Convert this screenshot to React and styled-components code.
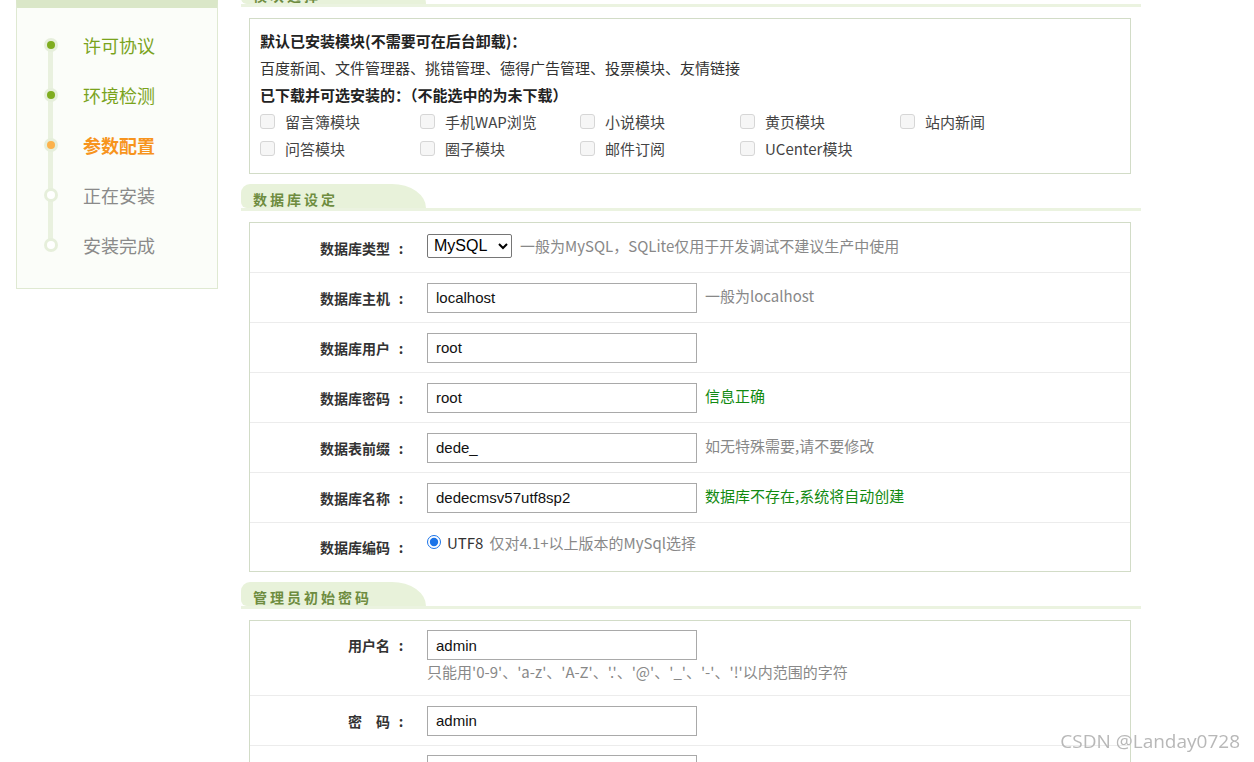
import styled, { createGlobalStyle } from "styled-components"

const Global = createGlobalStyle`
  html, body { margin: 0; padding: 0; background: #fff; }
  body {
    font-family: "Noto Sans CJK SC", "Liberation Sans", sans-serif;
    font-size: 15px;
    color: #333;
    overflow: hidden;
  }
`

const Page = styled.div`
  display: flex;
  align-items: flex-start;
  height: 762px;
  overflow: hidden;
`

const Sidebar = styled.div`
  margin-left: 16px;
  width: 200px;
  height: 280px;
  box-sizing: content-box;
  background: #fbfdf9;
  border: 1px solid #dfe9d2;
  border-top: 8px solid #dae7c8;
`

const StepList = styled.ul`
  list-style: none;
  margin: 0;
  padding: 12px 0 0 0;
  position: relative;
  &::before {
    content: "";
    position: absolute;
    left: 31px;
    top: 38px;
    height: 200px;
    width: 5px;
    background: #e9f1df;
  }
`

const Step = styled.li`
  display: flex;
  align-items: center;
  height: 50px;
  font-size: 18px;
  line-height: 50px;
  color: ${p => (p.$state === "done" ? "#7aa31c" : p.$state === "cur" ? "#f7941d" : "#8a8a8a")};
  font-weight: ${p => (p.$state === "cur" ? "bold" : "normal")};
`

const Dot = styled.span`
  width: 14px;
  height: 14px;
  margin-left: 27px;
  margin-right: 25px;
  border-radius: 50%;
  background: #e6efdb;
  display: flex;
  align-items: center;
  justify-content: center;
  position: relative;
  z-index: 1;
  &::after {
    content: "";
    width: 8px;
    height: 8px;
    border-radius: 50%;
    background: ${p => (p.$state === "done" ? "#7fad20" : p.$state === "cur" ? "#fcb24c" : "#ffffff")};
  }
`

const Main = styled.div`
  margin-left: 23px;
  margin-top: -20px;
  width: 900px;
`

const SectionHead = styled.div`
  height: 24px;
  border-bottom: 3px solid #ebf3e0;
  display: flex;
`

const Tab = styled.div`
  width: 185px;
  height: 24px;
  background: #e8f2da;
  border-radius: 9px 34px 0 6px / 9px 24px 0 6px;
  padding-left: 12px;
  box-sizing: border-box;
  font-size: 14px;
  font-weight: bold;
  letter-spacing: 3px;
  color: #6e8c3f;
  line-height: 30px;
`

const Panel = styled.div`
  margin: 11px 10px 10px 8px;
  border: 1px solid #d2dcc7;
  background: #fff;
`

const ModulePanel = styled(Panel)`
  padding: 8px 10px 11px 10px;
`

const Line = styled.div`
  line-height: 27px;
  font-size: 15px;
  font-weight: ${p => (p.$bold ? "bold" : "normal")};
  color: ${p => (p.$bold ? "#222" : "#333")};
`

const CheckGrid = styled.div`
  display: grid;
  grid-template-columns: repeat(5, 160px);
`

const CheckItem = styled.label`
  display: flex;
  align-items: center;
  height: 27px;
  color: #444;
  font-size: 15px;
`

const Check = styled.input.attrs({ type: "checkbox", disabled: true })`
  appearance: none;
  width: 15px;
  height: 15px;
  margin: 0 10px 0 0;
  border: 1px solid #d6d6d6;
  border-radius: 3px;
  background: #f6f6f6;
`

const Row = styled.div`
  display: flex;
  align-items: ${p => (p.$top ? "flex-start" : "center")};
  height: ${p => p.$h || 50}px;
  padding-top: ${p => (p.$top ? 9 : 0)}px;
  box-sizing: border-box;
  border-bottom: ${p => (p.$last ? "none" : "1px solid #ececec")};
`

const Label = styled.div`
  width: 162px;
  flex-shrink: 0;
  display: flex;
  justify-content: flex-end;
  font-weight: bold;
  font-size: 14px;
  color: #333;
  line-height: ${p => (p.$top ? "30px" : "normal")};
`

const Colon = styled.span`
  width: 22px;
  text-align: center;
`

const Value = styled.div`
  margin-left: 15px;
  display: flex;
  flex-direction: ${p => (p.$col ? "column" : "row")};
  align-items: ${p => (p.$col ? "flex-start" : "center")};
`

const TextInput = styled.input.attrs({ type: "text", readOnly: true })`
  width: 270px;
  height: 30px;
  box-sizing: border-box;
  border: 1px solid #a9a9a9;
  padding: 0 8px;
  font-family: "Liberation Sans", Arial, sans-serif;
  font-size: 15px;
  color: #111;
  outline: none;
`

const Select = styled.select`
  height: 24px;
  font-family: "Liberation Sans", Arial, sans-serif;
  font-size: 16px;
  color: #000;
  border: 1px solid #767676;
  border-radius: 2px;
  background: #fff;
  padding: 0 2px;
  width: 85px;
  margin-top: -4px;
`

const Hint = styled.span`
  margin-left: ${p => (p.$below ? 0 : 8)}px;
  margin-top: ${p => (p.$below ? 1 : 0)}px;
  margin-bottom: ${p => (p.$up ? 5 : 0)}px;
  font-size: 15px;
  color: ${p => (p.$ok ? "#118a11" : "#888")};
`

const Radio = styled.input.attrs({ type: "radio", defaultChecked: true })`
  width: 14px;
  height: 14px;
  margin: 0 6px 0 0;
  accent-color: #1a73e8;
`

const RadioWrap = styled.div`
  display: flex;
  align-items: center;
  margin-top: -10px;
  font-size: 15px;
  color: #333;
`

const Muted = styled.span`
  color: #888;
  margin-left: 6px;
`

const Watermark = styled.div`
  position: fixed;
  right: 14px;
  bottom: 8px;
  font-family: "Open Sans", "Noto Sans", sans-serif;
  font-size: 19px;
  color: #b8b8b8;
`

const steps = [
  ["许可协议", "done"],
  ["环境检测", "done"],
  ["参数配置", "cur"],
  ["正在安装", "todo"],
  ["安装完成", "todo"],
]

const modules = [
  "留言簿模块", "手机WAP浏览", "小说模块", "黄页模块", "站内新闻",
  "问答模块", "圈子模块", "邮件订阅", "UCenter模块",
]

const dbRows = [
  { label: "数据库主机", value: "localhost", hint: "一般为localhost" },
  { label: "数据库用户", value: "root" },
  { label: "数据库密码", value: "root", hint: "信息正确", ok: true },
  { label: "数据表前缀", value: "dede_", hint: "如无特殊需要,请不要修改" },
  { label: "数据库名称", value: "dedecmsv57utf8sp2", hint: "数据库不存在,系统将自动创建", ok: true },
]

const FieldLabel = ({ children, top }) => (
  <Label $top={top}>
    {children}
    <Colon>:</Colon>
  </Label>
)

export default function App() {
  return (
    <Page>
      <Global />
      <Sidebar>
        <StepList>
          {steps.map(([name, state]) => (
            <Step key={name} $state={state}>
              <Dot $state={state} />
              {name}
            </Step>
          ))}
        </StepList>
      </Sidebar>

      <Main>
        <SectionHead><Tab>模块选择</Tab></SectionHead>
        <ModulePanel>
          <Line $bold>默认已安装模块(不需要可在后台卸载)：</Line>
          <Line>百度新闻、文件管理器、挑错管理、德得广告管理、投票模块、友情链接</Line>
          <Line $bold>已下载并可选安装的：（不能选中的为未下载）</Line>
          <CheckGrid>
            {modules.map(m => (
              <CheckItem key={m}><Check />{m}</CheckItem>
            ))}
          </CheckGrid>
        </ModulePanel>

        <SectionHead><Tab>数据库设定</Tab></SectionHead>
        <Panel>
          <Row>
            <FieldLabel>数据库类型</FieldLabel>
            <Value>
              <Select defaultValue="mysql">
                <option value="mysql">MySQL</option>
                <option value="sqlite">SQLite</option>
              </Select>
              <Hint $up>一般为MySQL，SQLite仅用于开发调试不建议生产中使用</Hint>
            </Value>
          </Row>
          {dbRows.map(r => (
            <Row key={r.label}>
              <FieldLabel>{r.label}</FieldLabel>
              <Value>
                <TextInput defaultValue={r.value} />
                {r.hint && <Hint $ok={r.ok} $up>{r.hint}</Hint>}
              </Value>
            </Row>
          ))}
          <Row $last $h={48}>
            <FieldLabel>数据库编码</FieldLabel>
            <Value>
              <RadioWrap>
                <Radio name="charset" />
                UTF8<Muted>仅对4.1+以上版本的MySql选择</Muted>
              </RadioWrap>
            </Value>
          </Row>
        </Panel>

        <SectionHead><Tab>管理员初始密码</Tab></SectionHead>
        <Panel>
          <Row $top $h={75}>
            <FieldLabel top>用户名</FieldLabel>
            <Value $col>
              <TextInput defaultValue="admin" />
              <Hint $below>只能用'0-9'、'a-z'、'A-Z'、'.'、'@'、'_'、'-'、'!'以内范围的字符</Hint>
            </Value>
          </Row>
          <Row>
            <FieldLabel>密　码</FieldLabel>
            <Value><TextInput defaultValue="admin" /></Value>
          </Row>
          <Row $top $h={60}>
            <FieldLabel top>Cookie加密码</FieldLabel>
            <Value><TextInput defaultValue="" /></Value>
          </Row>
        </Panel>
      </Main>

      <Watermark>CSDN @Landay0728</Watermark>
    </Page>
  )
}
